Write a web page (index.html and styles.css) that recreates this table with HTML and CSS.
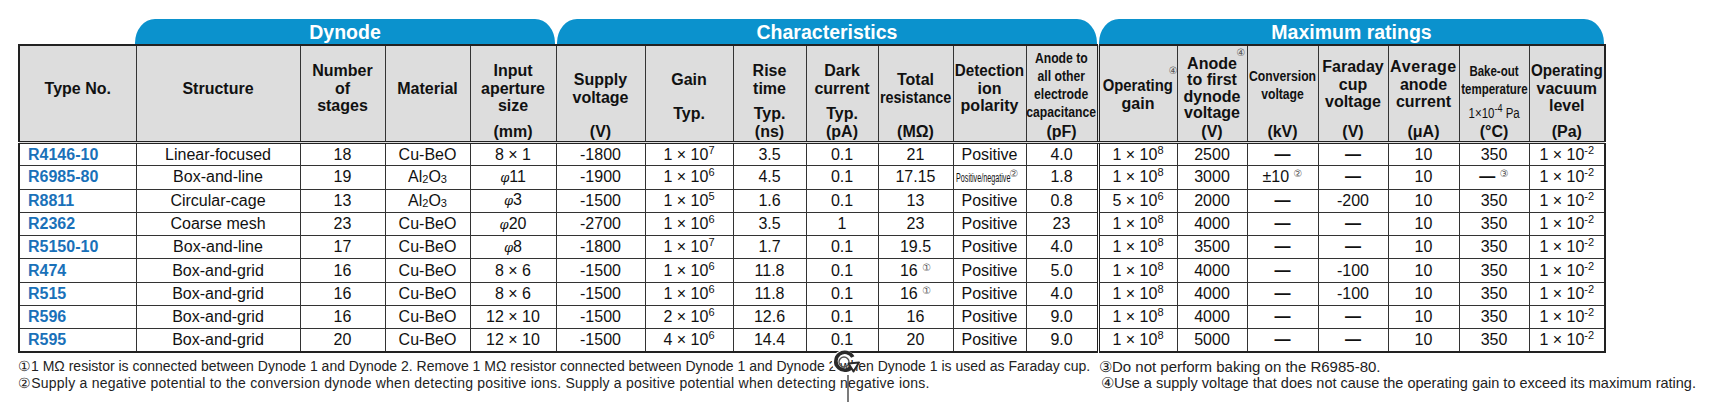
FILE: index.html
```html
<!DOCTYPE html>
<html lang="en">
<head>
<meta charset="utf-8">
<title>Electron multiplier specifications</title>
<link rel="stylesheet" href="styles.css">
</head>
<body>
<div class="page">
  <div class="tabs">
    <div class="tab-gap"></div>
    <div class="tab tab-dyn">Dynode</div>
    <div class="tab tab-char">Characteristics</div>
    <div class="tab tab-max">Maximum ratings</div>
  </div>

  <table class="spec">
    <colgroup>
      <col style="width:117px"><col style="width:164px"><col style="width:85px"><col style="width:85px"><col style="width:86px">
      <col style="width:89px"><col style="width:88px"><col style="width:73px"><col style="width:72px"><col style="width:75px"><col style="width:73px"><col style="width:72px">
      <col style="width:79px"><col style="width:70px"><col style="width:71px"><col style="width:70px"><col style="width:71px"><col style="width:70px"><col style="width:76px">
    </colgroup>
    <thead>
      <tr>
        <th><div class="hd"><div class="lbl"><span>Type No.</span></div><div class="unit"></div></div></th>
        <th><div class="hd"><div class="lbl"><span>Structure</span></div><div class="unit"></div></div></th>
        <th><div class="hd"><div class="lbl"><span>Number</span><span>of</span><span>stages</span></div><div class="unit"></div></div></th>
        <th><div class="hd"><div class="lbl"><span>Material</span></div><div class="unit"></div></div></th>
        <th><div class="hd"><div class="lbl"><span>Input</span><span>aperture</span><span>size</span></div><div class="unit">(mm)</div></div></th>
        <th><div class="hd"><div class="lbl"><span>Supply</span><span>voltage</span></div><div class="unit">(V)</div></div></th>
        <th><div class="hd"><div class="lbl"><span>Gain</span></div><div class="typ">Typ.</div><div class="unit"></div></div></th>
        <th><div class="hd"><div class="lbl"><span>Rise</span><span>time</span></div><div class="typ">Typ.</div><div class="unit">(ns)</div></div></th>
        <th><div class="hd"><div class="lbl"><span>Dark</span><span>current</span></div><div class="typ">Typ.</div><div class="unit">(pA)</div></div></th>
        <th><div class="hd"><div class="lbl"><span>Total</span><span class="nar90">resistance</span></div><div class="unit">(M&Omega;)</div></div></th>
        <th><div class="hd"><div class="lbl"><span class="nar95">Detection</span><span>ion</span><span>polarity</span></div><div class="unit"></div></div></th>
        <th><div class="hd"><div class="lbl np small"><span class="nar88">Anode to</span><span class="nar88">all other</span><span class="nar88">electrode</span><span class="nar88">capacitance</span></div><div class="unit">(pF)</div></div></th>
        <th class="sep"><div class="hd"><div class="lbl"><div class="stk"><span class="cnh">&#9315;</span><span class="nar93">Operating</span><span>gain</span></div></div><div class="unit"></div></div></th>
        <th><div class="hd"><div class="lbl np"><div class="stk tight"><span class="cnh up">&#9315;</span><span>Anode</span><span>to first</span><span>dynode</span><span>voltage</span></div></div><div class="unit">(V)</div></div></th>
        <th><div class="hd"><div class="lbl np small"><span class="nar88">Conversion</span><span class="nar88">voltage</span></div><div class="unit">(kV)</div></div></th>
        <th><div class="hd"><div class="lbl np"><span>Faraday</span><span>cup</span><span>voltage</span></div><div class="unit">(V)</div></div></th>
        <th><div class="hd"><div class="lbl np"><span class="wide">Average</span><span>anode</span><span>current</span></div><div class="unit">(&mu;A)</div></div></th>
        <th><div class="hd"><div class="lbl small"><span class="nar82">Bake-out</span><span class="nar82">temperature</span></div><div class="typ small"><span class="nar82 reg">1&times;10<sup>-4</sup> Pa</span></div><div class="unit">(&deg;C)</div></div></th>
        <th><div class="hd"><div class="lbl"><span class="nar95">Operating</span><span>vacuum</span><span>level</span></div><div class="unit">(Pa)</div></div></th>
      </tr>
    </thead>
    <tbody>
      <tr>
        <td class="type">R4146-10</td><td>Linear-focused</td><td>18</td><td>Cu-BeO</td><td>8 &times; 1</td>
        <td>-1800</td><td>1 &times; 10<sup>7</sup></td><td>3.5</td><td>0.1</td><td>21</td><td>Positive</td><td>4.0</td>
        <td class="sep">1 &times; 10<sup>8</sup></td><td>2500</td><td class="dash">&mdash;</td><td class="dash">&mdash;</td><td>10</td><td>350</td><td>1 &times; 10<sup>-2</sup></td>
      </tr>
      <tr>
        <td class="type">R6985-80</td><td>Box-and-line</td><td>19</td><td>Al<sub>2</sub>O<sub>3</sub></td><td><i class="phi">&phi;</i>11</td>
        <td>-1900</td><td>1 &times; 10<sup>6</sup></td><td>4.5</td><td>0.1</td><td>17.15</td><td class="left"><span class="squeeze">Positive/negative</span><span class="cn">&#9313;</span></td><td>1.8</td>
        <td class="sep">1 &times; 10<sup>8</sup></td><td>3000</td><td>&plusmn;10 <span class="cn">&#9313;</span></td><td class="dash">&mdash;</td><td>10</td><td><b>&mdash;</b> <span class="cn">&#9314;</span></td><td>1 &times; 10<sup>-2</sup></td>
      </tr>
      <tr>
        <td class="type">R8811</td><td>Circular-cage</td><td>13</td><td>Al<sub>2</sub>O<sub>3</sub></td><td><i class="phi">&phi;</i>3</td>
        <td>-1500</td><td>1 &times; 10<sup>5</sup></td><td>1.6</td><td>0.1</td><td>13</td><td>Positive</td><td>0.8</td>
        <td class="sep">5 &times; 10<sup>6</sup></td><td>2000</td><td class="dash">&mdash;</td><td>-200</td><td>10</td><td>350</td><td>1 &times; 10<sup>-2</sup></td>
      </tr>
      <tr>
        <td class="type">R2362</td><td>Coarse mesh</td><td>23</td><td>Cu-BeO</td><td><i class="phi">&phi;</i>20</td>
        <td>-2700</td><td>1 &times; 10<sup>6</sup></td><td>3.5</td><td>1</td><td>23</td><td>Positive</td><td>23</td>
        <td class="sep">1 &times; 10<sup>8</sup></td><td>4000</td><td class="dash">&mdash;</td><td class="dash">&mdash;</td><td>10</td><td>350</td><td>1 &times; 10<sup>-2</sup></td>
      </tr>
      <tr>
        <td class="type">R5150-10</td><td>Box-and-line</td><td>17</td><td>Cu-BeO</td><td><i class="phi">&phi;</i>8</td>
        <td>-1800</td><td>1 &times; 10<sup>7</sup></td><td>1.7</td><td>0.1</td><td>19.5</td><td>Positive</td><td>4.0</td>
        <td class="sep">1 &times; 10<sup>8</sup></td><td>3500</td><td class="dash">&mdash;</td><td class="dash">&mdash;</td><td>10</td><td>350</td><td>1 &times; 10<sup>-2</sup></td>
      </tr>
      <tr>
        <td class="type">R474</td><td>Box-and-grid</td><td>16</td><td>Cu-BeO</td><td>8 &times; 6</td>
        <td>-1500</td><td>1 &times; 10<sup>6</sup></td><td>11.8</td><td>0.1</td><td>16 <span class="cn">&#9312;</span></td><td>Positive</td><td>5.0</td>
        <td class="sep">1 &times; 10<sup>8</sup></td><td>4000</td><td class="dash">&mdash;</td><td>-100</td><td>10</td><td>350</td><td>1 &times; 10<sup>-2</sup></td>
      </tr>
      <tr>
        <td class="type">R515</td><td>Box-and-grid</td><td>16</td><td>Cu-BeO</td><td>8 &times; 6</td>
        <td>-1500</td><td>1 &times; 10<sup>6</sup></td><td>11.8</td><td>0.1</td><td>16 <span class="cn">&#9312;</span></td><td>Positive</td><td>4.0</td>
        <td class="sep">1 &times; 10<sup>8</sup></td><td>4000</td><td class="dash">&mdash;</td><td>-100</td><td>10</td><td>350</td><td>1 &times; 10<sup>-2</sup></td>
      </tr>
      <tr>
        <td class="type">R596</td><td>Box-and-grid</td><td>16</td><td>Cu-BeO</td><td>12 &times; 10</td>
        <td>-1500</td><td>2 &times; 10<sup>6</sup></td><td>12.6</td><td>0.1</td><td>16</td><td>Positive</td><td>9.0</td>
        <td class="sep">1 &times; 10<sup>8</sup></td><td>4000</td><td class="dash">&mdash;</td><td class="dash">&mdash;</td><td>10</td><td>350</td><td>1 &times; 10<sup>-2</sup></td>
      </tr>
      <tr>
        <td class="type">R595</td><td>Box-and-grid</td><td>20</td><td>Cu-BeO</td><td>12 &times; 10</td>
        <td>-1500</td><td>4 &times; 10<sup>6</sup></td><td>14.4</td><td>0.1</td><td>20</td><td>Positive</td><td>9.0</td>
        <td class="sep">1 &times; 10<sup>8</sup></td><td>5000</td><td class="dash">&mdash;</td><td class="dash">&mdash;</td><td>10</td><td>350</td><td>1 &times; 10<sup>-2</sup></td>
      </tr>
    </tbody>
  </table>

  <div class="notes">
    <div class="note">&#9312;1 M&Omega; resistor is connected between Dynode 1 and Dynode 2. Remove 1 M&Omega; resistor connected between Dynode 1 and Dynode 2 when Dynode 1 is used as Faraday cup.</div>
    <div class="note n3">&#9314;Do not perform baking on the R6985-80.</div>
    <div class="note n2">&#9313;Supply a negative potential to the conversion dynode when detecting positive ions. Supply a positive potential when detecting negative ions.</div>
    <div class="note n4">&#9315;Use a supply voltage that does not cause the operating gain to exceed its maximum rating.</div>
  </div>

  <svg class="cursor" width="40" height="56" viewBox="0 0 40 56" aria-hidden="true">
    <line x1="20" y1="28" x2="20" y2="56" stroke="#333" stroke-width="1.3"/>
    <circle cx="16" cy="15" r="11" fill="none" stroke="#fff" stroke-width="2"/>
    <path d="M24.5 19 A9 9 0 1 1 24.8 10" fill="none" stroke="#2a2a2a" stroke-width="3.6"/>
    <circle cx="16" cy="15" r="5" fill="none" stroke="#555" stroke-width="1.4"/>
    <path d="M20.5 16.5 L31 15.5 L25.5 24.5 Z" fill="#fff" stroke="#2a2a2a" stroke-width="2" stroke-linejoin="round"/>
  </svg>
</div>
</body>
</html>
```

FILE: styles.css
```css
* { box-sizing: border-box; }

body {
  margin: 0;
  background: #fff;
  font-family: "Liberation Sans", Arial, sans-serif;
  color: #111;
}

.page {
  position: relative;
  width: 1710px;
  height: 402px;
  padding: 19px 0 0 18px;
  overflow: hidden;
}

/* group tabs */
.tabs {
  display: flex;
  height: 25px;
}
.tab-gap { width: 117px; flex: none; }
.tab {
  flex: none;
  background: #0b92cd;
  color: #fff;
  font-weight: bold;
  font-size: 19.5px;
  line-height: 23px;
  padding-top: 2px;
  text-align: center;
  border-radius: 20px 20px 0 0 / 24px 24px 0 0;
}
.tab-dyn { width: 420px; }
.tab-char { width: 540px; margin-left: 2px; }
.tab-max { width: 505px; margin-left: 2px; }

/* table */
.spec {
  border-collapse: collapse;
  table-layout: fixed;
  width: 1586px;
  border: 2px solid #222;
}
.spec th,
.spec td {
  border: 1px solid #333;
  padding: 0;
}
.spec th {
  background: #dddddd;
  border-bottom: 3px double #222;
  height: 95px;
  vertical-align: top;
  font-size: 16px;
  font-weight: bold;
  color: #111;
}
.spec .sep { border-left: 3px double #222; }

.hd {
  height: 95px;
  display: flex;
  flex-direction: column;
}
.lbl {
  flex: 1;
  display: flex;
  flex-direction: column;
  align-items: center;
  justify-content: center;
  padding-top: 8px;
}
.lbl.np { padding-top: 0; }
.lbl > span,
.stk > span {
  display: block;
  white-space: nowrap;
  line-height: 17.5px;
}
.lbl.small > span { font-size: 14px; line-height: 18px; }
.stk {
  display: flex;
  flex-direction: column;
  align-items: center;
}
.stk.tight > span { line-height: 16.5px; }
.stk > .cnh {
  align-self: flex-end;
  font-family: "DejaVu Sans", "Noto Sans CJK JP", sans-serif;
  font-weight: normal;
  font-size: 10px;
  line-height: 12px;
  color: #555;
  margin-right: -2px;
}
.stk > .cnh.up {
  line-height: 10px;
  margin-bottom: -2px;
  margin-right: -5px;
}
.typ,
.unit {
  height: 17px;
  line-height: 17px;
  margin-bottom: 1px;
  text-align: center;
  white-space: nowrap;
}
.typ.small { font-size: 14px; display: flex; justify-content: center; }

.nar95 { transform: scaleX(0.95); }
.nar93 { transform: scaleX(0.93); }
.nar90 { transform: scaleX(0.9); }
.nar88 { transform: scaleX(0.87); }
.nar82 { transform: scaleX(0.82); display: inline-block; }
.reg { font-weight: normal; }
.wide { letter-spacing: 0.6px; }

.spec td {
  height: 23.3px;
  font-size: 16px;
  line-height: 18px;
  text-align: center;
  white-space: nowrap;
  color: #111;
}
.spec td.type {
  text-align: left;
  padding-left: 8px;
  color: #1a71b9;
  font-weight: bold;
}
.spec td.left { text-align: left; padding-left: 2px; }
.spec td.dash { font-weight: bold; }

sup {
  font-size: 11px;
  line-height: 0;
  vertical-align: 6px;
}
sub {
  font-size: 11px;
  line-height: 0;
  vertical-align: -1px;
}
.phi {
  font-family: "DejaVu Serif", "Liberation Serif", serif;
  font-size: 13px;
}
.cn {
  font-family: "DejaVu Sans", "Noto Sans CJK JP", sans-serif;
  font-size: 10px;
  color: #555;
  vertical-align: 5px;
  line-height: 0;
}
.squeeze {
  display: inline-block;
  width: 54px;
  font-size: 12px;
  transform: scaleX(0.6);
  transform-origin: left center;
  white-space: nowrap;
  vertical-align: 0;
}

/* footnotes */
.notes {
  display: grid;
  grid-template-columns: 1081px 1fr;
  margin-top: 5px;
  font-size: 14px;
  line-height: 17px;
  color: #222;
  white-space: nowrap;
}
.n2 { letter-spacing: 0.23px; }
.n3 { font-size: 15px; }
.n4 { font-size: 14.5px; padding-left: 2px; }

/* screen cursor overlay */
.cursor {
  position: absolute;
  left: 828px;
  top: 347px;
}
```
